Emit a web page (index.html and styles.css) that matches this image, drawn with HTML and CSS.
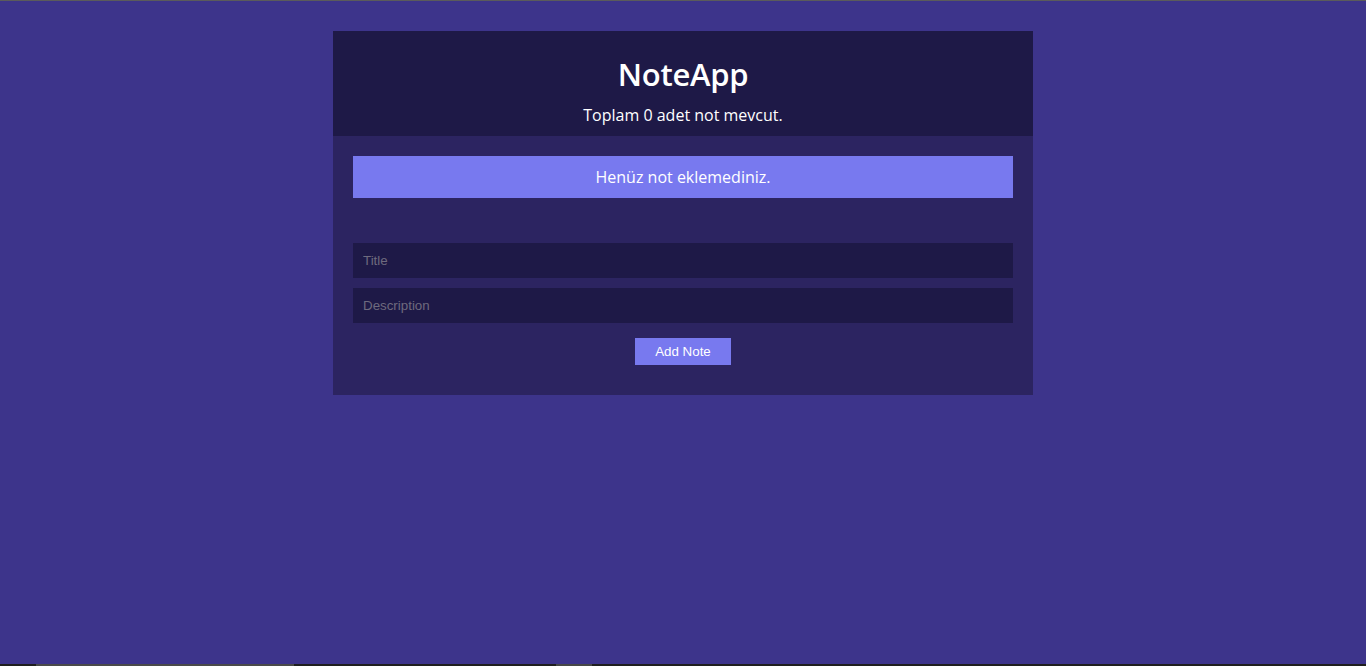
FILE: index.html
```html
<!DOCTYPE html>
<html lang="tr">
<head>
<meta charset="utf-8">
<title>NoteApp</title>
<link rel="stylesheet" href="styles.css">
</head>
<body>
<div class="topline"></div>
<main class="app">
  <header class="app-header">
    <h1 class="app-title">NoteApp</h1>
    <p class="app-count">Toplam 0 adet not mevcut.</p>
  </header>
  <section class="app-body">
    <div class="empty-alert">Henüz not eklemediniz.</div>
    <form class="note-form">
      <input class="note-input" type="text" placeholder="Title">
      <input class="note-input" type="text" placeholder="Description">
      <button class="add-btn" type="button">Add Note</button>
    </form>
  </section>
</main>
<div class="bottom-strip">
  <span class="seg seg-a"></span>
  <span class="seg seg-b"></span>
</div>
</body>
</html>
```
FILE: styles.css
```css
html, body {
  margin: 0;
  padding: 0;
  height: 100%;
}
body {
  background: #3d348b;
  font-family: "Open Sans", "Liberation Sans", sans-serif;
  overflow: hidden;
}
.topline {
  height: 1px;
  background: #5b5b5b;
}
.app {
  width: 700px;
  margin: 30px auto 0;
}
.app-header {
  background: #1e1947;
  color: #fff;
  text-align: center;
  padding: 21px 0 10px;
}
.app-title {
  margin: 0;
  font-size: 31px;
  line-height: 44px;
  font-weight: 600;
  letter-spacing: -0.3px;
}
.app-count {
  margin: 8px 0 0;
  font-size: 16px;
  line-height: 22px;
}
.app-body {
  background: #2c2461;
  padding: 20px 20px 30px;
}
.empty-alert {
  background: #7879ef;
  color: #fff;
  text-align: center;
  font-size: 16px;
  line-height: 22px;
  padding: 10px;
}
.note-form {
  margin-top: 45px;
  display: flex;
  flex-direction: column;
  align-items: center;
  gap: 10px;
}
.note-input {
  box-sizing: border-box;
  width: 100%;
  height: 35px;
  border: none;
  outline: none;
  background: #1e1947;
  color: #fff;
  font-family: "Liberation Sans", Arial, sans-serif;
  font-size: 13.333px;
  padding: 0 10px;
}
.note-input::placeholder {
  color: #6e6a7e;
}
.add-btn {
  margin-top: 5px;
  width: 96px;
  height: 27px;
  border: none;
  background: #7879ef;
  color: #fff;
  font-family: "Liberation Sans", Arial, sans-serif;
  font-size: 13.333px;
  padding: 0;
}
.bottom-strip {
  position: fixed;
  left: 0;
  right: 0;
  bottom: 0;
  height: 2px;
  background: #1f1f1f;
}
.seg {
  position: absolute;
  top: 0;
  height: 2px;
  background: #3c3c3c;
}
.seg-a { left: 36px; width: 258px; background: #4a4a4a; }
.seg-b { left: 556px; width: 36px; background: #474747; }
```
